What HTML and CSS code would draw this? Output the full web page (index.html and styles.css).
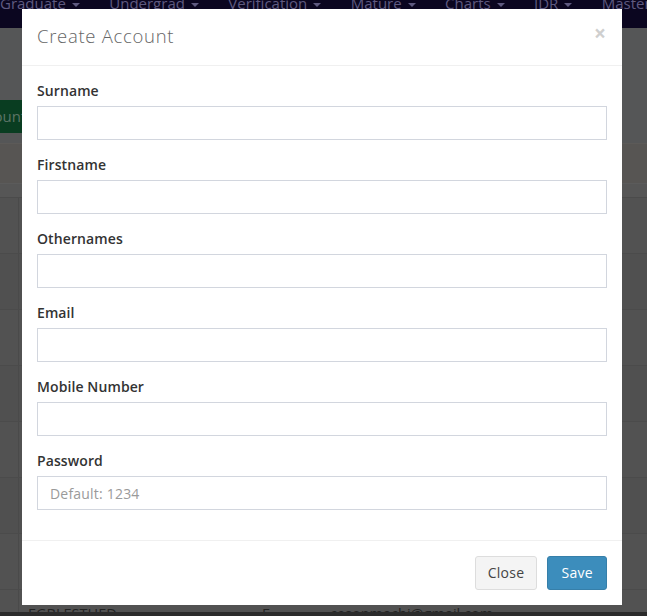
FILE: index.html
```html
<!DOCTYPE html>
<html>
<head>
<meta charset="utf-8">
<link rel="stylesheet" href="styles.css">
</head>
<body>
<div class="page">
  <nav class="navbar">
    <span class="nav-item">Graduate <i class="caret"></i></span>
    <span class="nav-item">Undergrad <i class="caret"></i></span>
    <span class="nav-item">Verification <i class="caret"></i></span>
    <span class="nav-item">Mature <i class="caret"></i></span>
    <span class="nav-item">Charts <i class="caret"></i></span>
    <span class="nav-item">IDR <i class="caret"></i></span>
    <span class="nav-item">Master</span>
  </nav>
  <div class="content">
    <div class="toolbar"><span class="btn-green">Add Account</span></div>
    <div class="thead"></div>
    <div class="tsub"></div>
    <div class="trow"></div>
    <div class="trow alt"></div>
    <div class="trow"></div>
    <div class="trow alt"></div>
    <div class="trow"></div>
    <div class="trow alt"></div>
    <div class="trow"></div>
    <div class="trow last">
      <span class="c1">EGBLESTHED</span><span class="c2">F</span><span class="c3">cesonmachi@gmail.com</span>
    </div>
  </div>
  <div class="bottom-strip"></div>

  <div class="modal">
    <div class="modal-header">
      <h4 class="modal-title">Create Account</h4>
      <span class="close">×</span>
    </div>
    <div class="modal-body">
      <div class="form-group"><label>Surname</label><input class="form-control" type="text"></div>
      <div class="form-group"><label>Firstname</label><input class="form-control" type="text"></div>
      <div class="form-group"><label>Othernames</label><input class="form-control" type="text"></div>
      <div class="form-group"><label>Email</label><input class="form-control" type="text"></div>
      <div class="form-group"><label>Mobile Number</label><input class="form-control" type="text"></div>
      <div class="form-group"><label>Password</label><input class="form-control" type="text" placeholder="Default: 1234"></div>
    </div>
    <div class="modal-footer">
      <button class="btn btn-default">Close</button>
      <button class="btn btn-primary">Save</button>
    </div>
  </div>
</div>
</body>
</html>
```
FILE: styles.css
```css
* { box-sizing: border-box; }
html, body { margin: 0; padding: 0; }
body {
  width: 647px;
  height: 616px;
  overflow: hidden;
  font-family: "Open Sans", "Noto Sans", sans-serif;
  background: #555657;
}
.page { position: relative; width: 647px; height: 616px; overflow: hidden; }

.navbar {
  height: 28px;
  background: #0b0620;
  display: flex;
  white-space: nowrap;
  overflow: hidden;
}
.nav-item {
  color: #5f5a80;
  font-size: 15px;
  line-height: 16px;
  margin-top: -5px;
  margin-right: 29.5px;
  flex: none;
}
.caret {
  display: inline-block;
  width: 0; height: 0;
  border-left: 4px solid transparent;
  border-right: 4px solid transparent;
  border-top: 4px solid #5f5a80;
  vertical-align: middle;
  margin-left: 2px;
}
.content { background: #555657; }
.toolbar { height: 115px; padding-top: 72px; }
.btn-green {
  display: inline-block;
  height: 33px;
  line-height: 33px;
  background: #093d21;
  color: #5c7466;
  font-size: 15px;
  padding: 0 10px;
  margin-left: -72px;
}
.thead { height: 40px; background: #575553; border-top: 1px solid #5c5a58; }
.tsub { height: 14px; background: #565656; border-top: 1px solid #5b5b5b; }
.trow {
  height: 56px;
  background: #525252;
  border-top: 1px solid #4b4b4b;
  position: relative;
}
.trow.alt { background: #505050; }
.trow::before {
  content: "";
  position: absolute;
  left: 18px; top: 0; bottom: 0;
  border-left: 1px solid #4a4a4a;
}
.trow.last { display: flex; padding-top: 14px; font-size: 14.5px; color: #222; }
.c1 { width: 262px; padding-left: 28px; }
.c2 { width: 68px; }
.bottom-strip {
  position: absolute;
  left: 0; right: 0; top: 612px; height: 4px;
  background: #2b2b2b;
}

.modal {
  position: absolute;
  left: 22px; top: 9px;
  width: 600px;
  background: #fff;
}
.modal-header {
  height: 57px;
  padding: 14px 15px 15px;
  border-bottom: 1px solid #f0f0f0;
  display: flex;
  justify-content: space-between;
  align-items: flex-start;
}
.modal-title {
  margin: 0;
  font-size: 18.5px;
  font-weight: 300;
  color: #666;
  line-height: 26px;
  letter-spacing: 0.7px;
}
.close {
  font-size: 21px;
  font-weight: 700;
  color: #cfcfcf;
  line-height: 18px;
  margin-top: 1px;
  margin-right: 1px;
}
.modal-body { padding: 15px; }
.form-group { margin-bottom: 15px; }
label {
  display: block;
  font-size: 14px;
  font-weight: 600;
  color: #333;
  line-height: 20px;
  margin-bottom: 5px;
  letter-spacing: 0.1px;
}
.form-control {
  display: block;
  width: 100%;
  height: 34px;
  border: 1px solid #d2d6de;
  border-radius: 0;
  padding: 6px 12px;
  font-size: 14px;
  font-family: inherit;
  color: #555;
  background: #fff;
}
.form-control::placeholder { color: #9a9a9a; letter-spacing: 0.2px; }
.modal-footer {
  border-top: 1px solid #f0f0f0;
  padding: 15px;
  display: flex;
  justify-content: flex-end;
  gap: 10px;
}
.btn {
  height: 34px;
  padding: 6px 13px;
  font-size: 14px;
  font-family: inherit;
  border-radius: 3px;
  border: 1px solid transparent;
  line-height: 20px;
  letter-spacing: 0.3px;
}
.btn-default { background: #f4f4f4; border-color: #ddd; color: #444; padding: 6px 12px; }
.btn-primary { background: #3c8dbc; border-color: #367fa9; color: #fff; }
```
